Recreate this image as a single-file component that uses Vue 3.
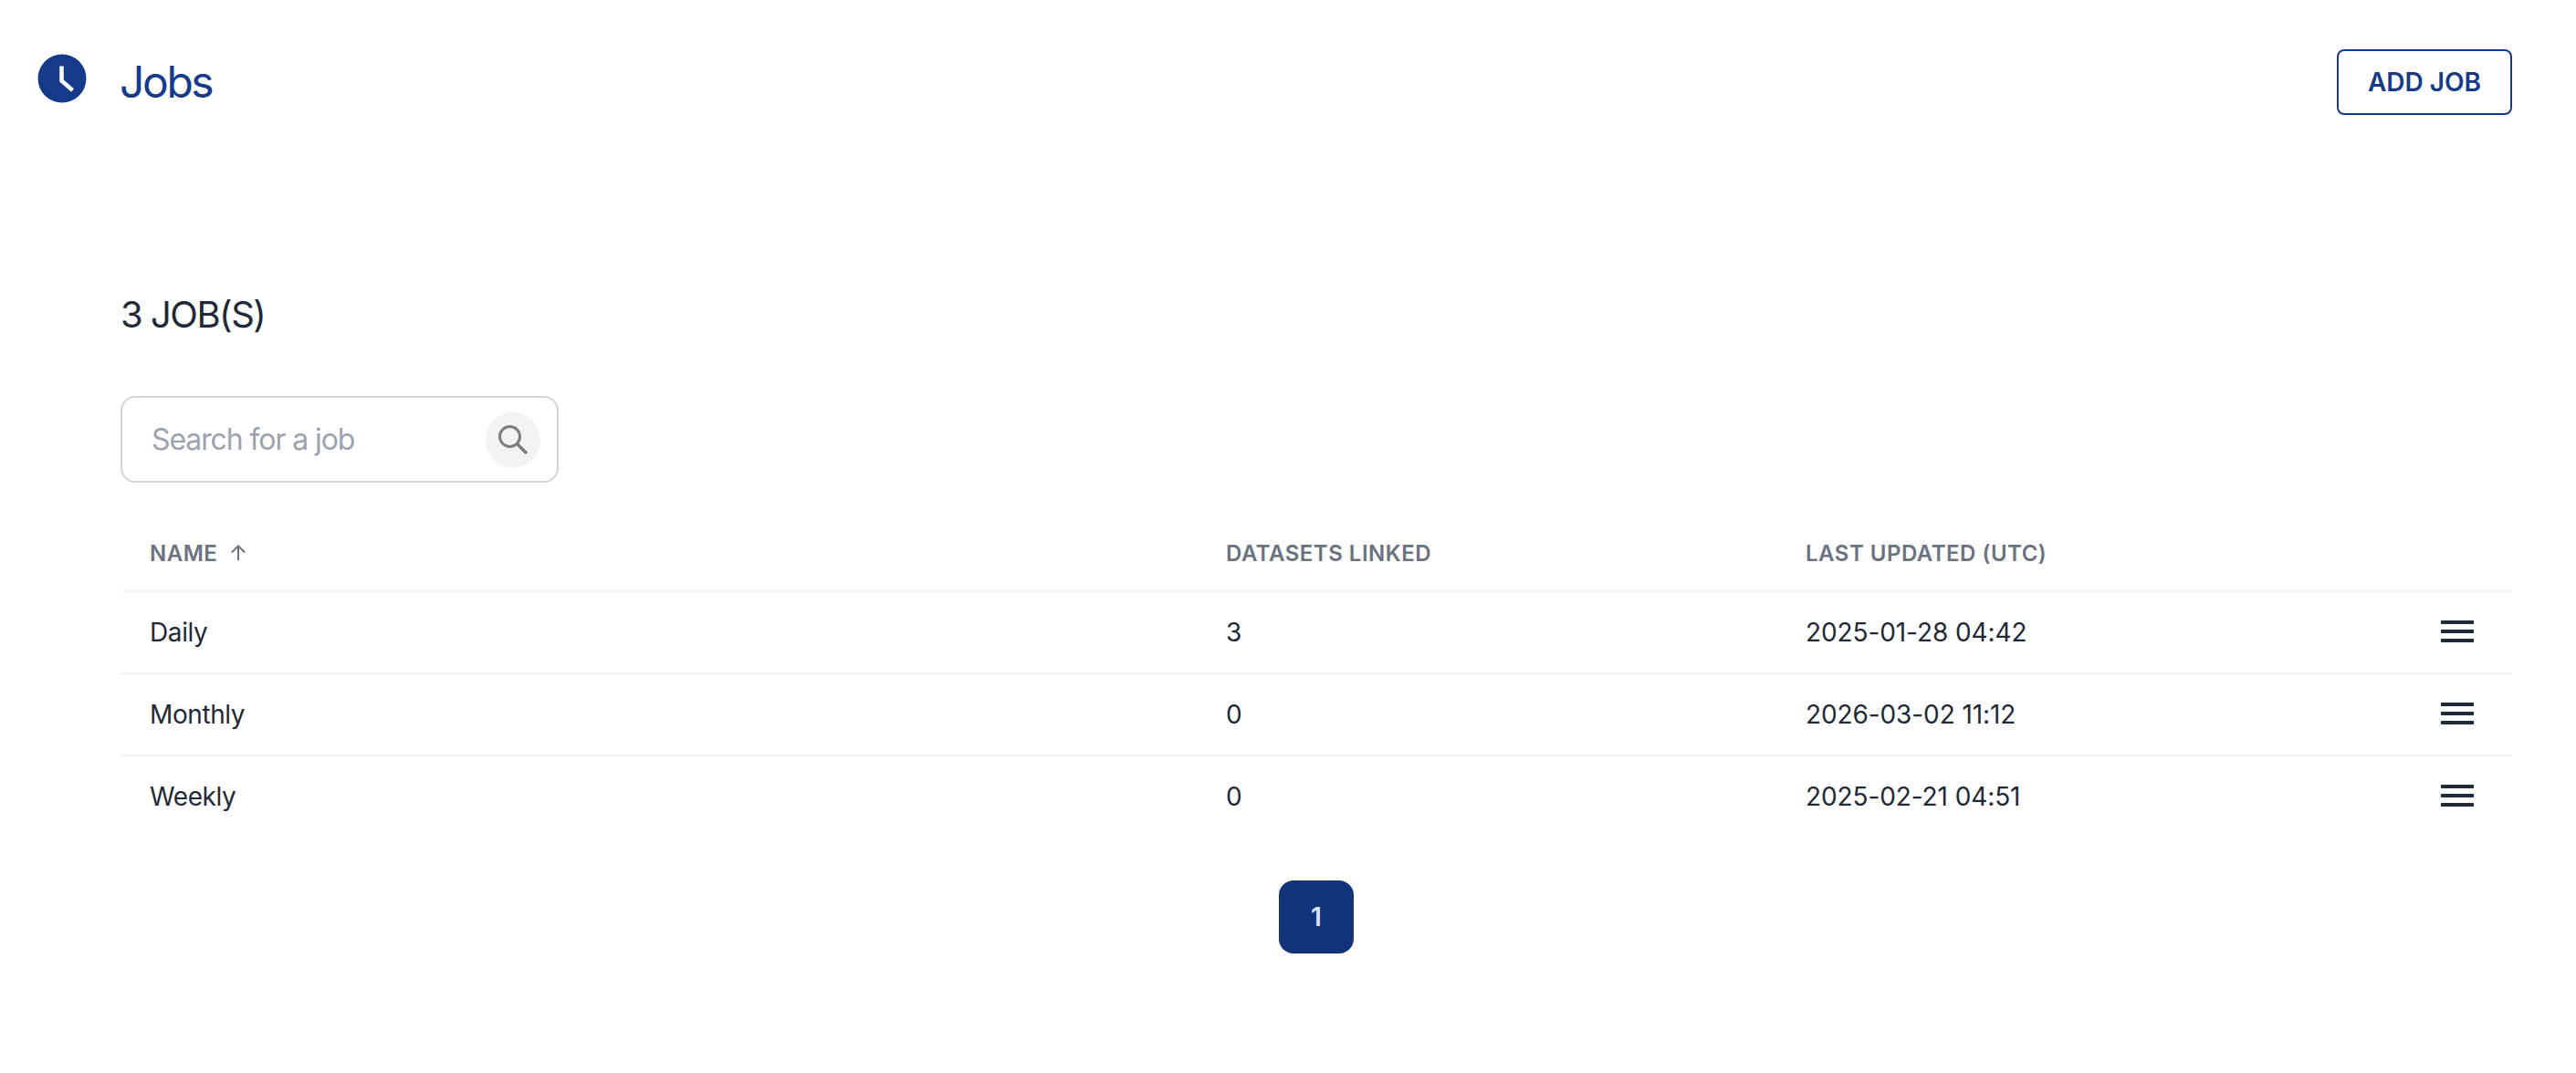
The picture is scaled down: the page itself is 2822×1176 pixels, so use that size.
<template>
    <div class="page">
        <!-- header -->
        <header class="top-bar">
            <div class="title-wrap">
                <svg class="clock-icon" viewBox="0 0 54 54" width="54" height="54">
                    <circle cx="27" cy="27" r="26.5" fill="#153a8a" />
                    <path d="M26.5 13.5V29.5L38.5 40" fill="none" stroke="#fff" stroke-width="4.5" />
                </svg>
                <h1 class="title">Jobs</h1>
            </div>
            <button type="button" class="add-button">ADD JOB</button>
        </header>

        <main class="content">
            <h2 class="count">{{ jobs.length }} JOB(S)</h2>

            <div class="search-box">
                <input type="text" class="search-input" placeholder="Search for a job" />
                <span class="search-icon">
                    <svg viewBox="0 0 32 32" width="32" height="32">
                        <circle cx="12.5" cy="12.5" r="11" fill="none" stroke="#7d7d7d" stroke-width="3" />
                        <path d="M20.5 20.5L31 31" fill="none" stroke="#7d7d7d" stroke-width="3.4" />
                    </svg>
                </span>
            </div>

            <div class="table">
                <div class="row head">
                    <div class="cell name-head">
                        NAME
                        <svg viewBox="0 0 18 18" width="18" height="18">
                            <path d="M9 17V1.5M1.8 8.5L9 1.5L16.2 8.5" fill="none" stroke="#6b7280" stroke-width="2" />
                        </svg>
                    </div>
                    <div class="cell">DATASETS LINKED</div>
                    <div class="cell">LAST UPDATED (UTC)</div>
                    <div class="cell"></div>
                </div>
                <div v-for="job in jobs" :key="job.name" class="row body-row">
                    <div class="cell name-cell">{{ job.name }}</div>
                    <div class="cell">{{ job.datasets }}</div>
                    <div class="cell">{{ job.updated }}</div>
                    <div class="cell menu-cell">
                        <span class="menu-icon"><i></i><i></i><i></i></span>
                    </div>
                </div>
            </div>

            <div class="pagination">
                <button type="button" class="page-button">1</button>
            </div>
        </main>
    </div>
</template>

<script setup>
const jobs = [
    { name: 'Daily', datasets: 3, updated: '2025-01-28 04:42' },
    { name: 'Monthly', datasets: 0, updated: '2026-03-02 11:12' },
    { name: 'Weekly', datasets: 0, updated: '2025-02-21 04:51' },
];
</script>

<style>
html,
body {
    margin: 0;
    background: #fff;
}
</style>

<style scoped>
.page {
    height: 1176px;
    box-sizing: border-box;
    font-family: Inter, "Liberation Sans", sans-serif;
    color: #1f2937;
    overflow: hidden;
}

.top-bar {
    display: flex;
    align-items: center;
    justify-content: space-between;
    padding: 54px 70px 0 41px;
}

.title-wrap {
    display: flex;
    align-items: center;
    gap: 36px;
}

.clock-icon {
    margin-bottom: 8px;
}

.title {
    margin: 0;
    font-size: 48px;
    line-height: 72px;
    font-weight: 400;
    letter-spacing: -2.4px;
    color: #153a8a;
}

.add-button {
    width: 192px;
    height: 72px;
    box-sizing: border-box;
    border: 2px solid #153a8a;
    border-radius: 8px;
    background: #fff;
    color: #153a8a;
    font-family: inherit;
    font-size: 28px;
    font-weight: 600;
}

.content {
    padding: 0 70px 0 132px;
}

.count {
    margin: 0;
    padding-top: 189px;
    font-size: 40px;
    line-height: 60px;
    font-weight: 400;
    letter-spacing: -1.5px;
}

.search-box {
    display: flex;
    align-items: center;
    width: 480px;
    height: 95px;
    box-sizing: border-box;
    margin-top: 59px;
    padding: 0 18px 0 32px;
    border: 2px solid #d1d5db;
    border-radius: 16px;
}

.search-input {
    flex: 1;
    min-width: 0;
    border: none;
    outline: none;
    padding: 0;
    font-family: inherit;
    font-size: 32px;
    letter-spacing: -1.1px;
    color: #1f2937;
}

.search-input::placeholder {
    color: #9ca3af;
    opacity: 1;
}

.search-icon {
    display: flex;
    align-items: center;
    justify-content: center;
    width: 60px;
    height: 60px;
    border-radius: 50%;
    background: #f3f3f3;
    box-shadow: 0 1px 2px rgba(0, 0, 0, 0.04);
}

.table {
    margin-top: 36px;
}

.row {
    display: grid;
    grid-template-columns: 1179px 635px 1fr 130px;
    align-items: center;
}

.cell {
    padding-left: 32px;
}

.head {
    height: 84px;
    box-sizing: border-box;
    border-bottom: 2px solid #f3f4f6;
    font-size: 24px;
    font-weight: 600;
    letter-spacing: 0.5px;
    color: #6b7280;
}

.name-head {
    display: flex;
    align-items: center;
    gap: 14px;
}

.body-row {
    height: 90px;
    box-sizing: border-box;
    border-bottom: 2px solid #f3f4f6;
    font-size: 28px;
    letter-spacing: -0.1px;
}

.body-row .name-cell {
    letter-spacing: -0.4px;
}

.body-row:last-child {
    border-bottom: none;
    padding-bottom: 2px;
}

.menu-cell {
    display: flex;
    justify-content: flex-end;
    padding: 0 42px 0 0;
}

.menu-icon {
    display: flex;
    flex-direction: column;
    gap: 6px;
    width: 36px;
    margin-bottom: 2px;
}

.menu-icon i {
    display: block;
    height: 4px;
    background: #1f2937;
}

.pagination {
    display: flex;
    justify-content: center;
    margin-top: 46px;
}

.page-button {
    width: 82px;
    height: 80px;
    border: none;
    border-radius: 16px;
    background: #12337a;
    color: #dbe4ff;
    font-family: inherit;
    font-size: 28px;
    font-weight: 600;
}
</style>
